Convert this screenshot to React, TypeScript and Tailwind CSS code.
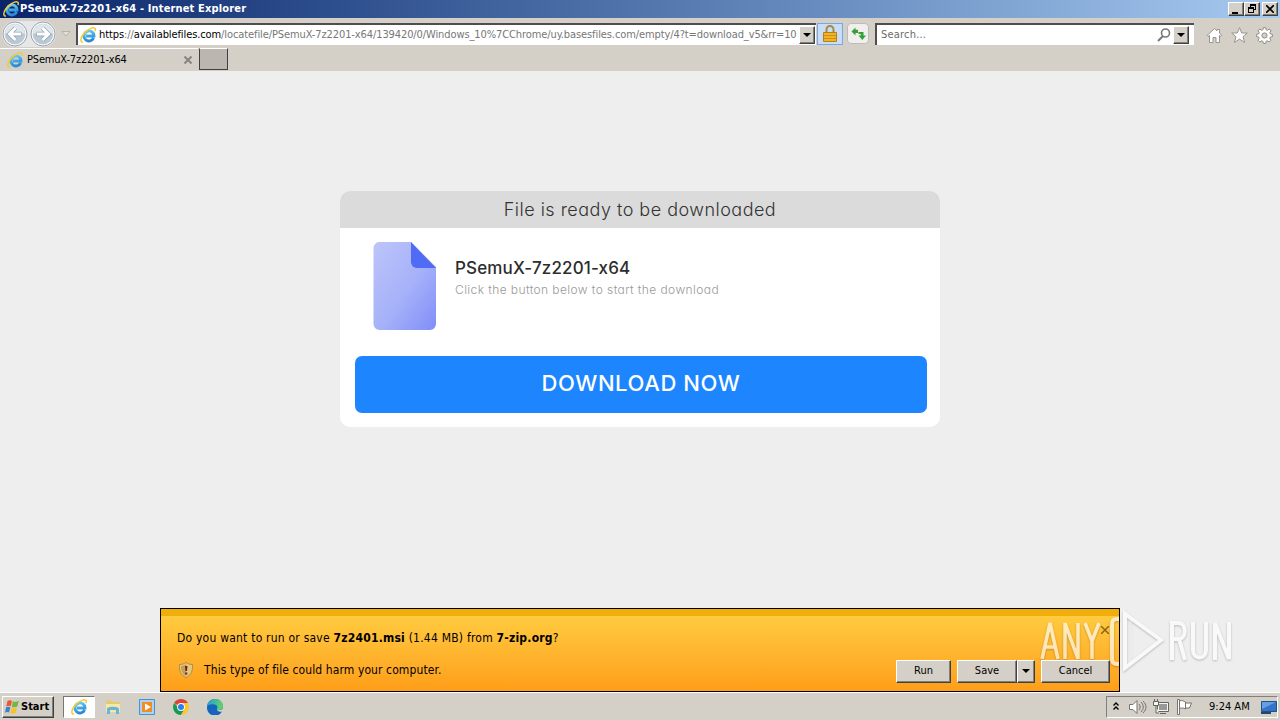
import React from 'react';

const ui = "font-['DejaVu_Sans_Condensed','DejaVu_Sans',sans-serif] [font-stretch:condensed]";
const geo = "font-['Inter',sans-serif] [font-feature-settings:'cv11']";
const raised =
  'bg-[#d4d0c8] border border-t-white border-l-white border-r-[#404040] border-b-[#404040] shadow-[inset_-1px_-1px_0_#808080]';

interface IconProps {
  size: number;
  className?: string;
}

const IeLogo: React.FC<IconProps> = ({ size, className = '' }) => (
  <svg width={size} height={size} viewBox="0 0 16 16" fill="none" className={`shrink-0 ${className}`}>
    <defs>
      <linearGradient id="ie" gradientUnits="userSpaceOnUse" x1="6" y1="2" x2="10" y2="15">
        <stop stopColor="#7ed6f8" />
        <stop offset=".55" stopColor="#3fa6e4" />
        <stop offset="1" stopColor="#2a82cf" />
      </linearGradient>
    </defs>
    <path d="M13.600 10.900A5 5 0 1 1 14 9H6" stroke="url(#ie)" strokeWidth="2.900" />
    <path d="M3 14.900C.4 15.300-.2 12.300 2.800 8 6 3.300 12 0 14.600 1.100c1 .5.9 1.700.3 3" stroke="#f3cb2c" strokeWidth="1.500" />
  </svg>
);

const DownArrow: React.FC = () => (
  <svg width="8" height="4" viewBox="0 0 8 4">
    <path d="M0 0h8L4 4z" fill="#000" />
  </svg>
);

const NavButton: React.FC<{ flip?: boolean }> = ({ flip }) => (
  <svg width="26" height="26" viewBox="0 0 26 26" fill="none" className={flip ? '-scale-x-100' : ''}>
    <circle cx="13" cy="13" r="12" fill="#f8f9fa" stroke="#98a3ab" strokeWidth="1" />
    <circle cx="13" cy="13" r="10.300" fill="#b9c8d3" />
    <path d="M3 13a10 10 0 0 1 20 0c-5-2.500-14-2.500-20 0z" fill="#dfe7ec" />
    <path d="M13.500 7 7.500 13l6 6M8 13h11.500" stroke="#92a3af" strokeWidth="4.400" />
    <path d="M13.500 7 7.500 13l6 6M8 13h11" stroke="#fff" strokeWidth="3" />
  </svg>
);

const TitleBar: React.FC = () => (
  <div className="flex h-[18px] items-center bg-linear-to-r from-[#0a246a] to-[#a6caf0] pr-[2px] pl-[3px]">
    <IeLogo size={16} />
    <span className="mt-px ml-[1px] grow text-[11px] font-bold tracking-[0.15px] whitespace-nowrap text-white">
      PSemuX-7z2201-x64 - Internet Explorer
    </span>
    <div className={`flex h-[14px] w-4 items-center justify-center ${raised}`}>
      <svg width="10" height="9" viewBox="0 0 10 9"><path d="M1 7h6v2H1z" /></svg>
    </div>
    <div className={`flex h-[14px] w-4 items-center justify-center ${raised}`}>
      <svg width="10" height="10" viewBox="0 0 10 10" shapeRendering="crispEdges">
        <path d="M3 0h6v6H7V5h1V2H4v1H3z" />
        <path fillRule="evenodd" d="M1 3h6v6H1zM2 5v3h4V5z" />
      </svg>
    </div>
    <div className={`ml-[2px] flex h-[14px] w-4 items-center justify-center ${raised}`}>
      <svg width="8" height="8" viewBox="0 0 8 8" stroke="#000" strokeWidth="1.6"><path d="m0 0 8 8M8 0 0 8" /></svg>
    </div>
  </div>
);

const Toolbar: React.FC = () => (
  <div className="flex h-[30px] items-center border-t border-[#d4d0c8] pl-[2px]">
    <div className="flex w-[54px] shrink-0 justify-between rounded-full bg-[#e6e7e8]">
      <NavButton />
      <NavButton flip />
    </div>
    <svg width="10" height="6" viewBox="0 0 10 6" className="mx-[5px] shrink-0" fill="#e4e1db" stroke="#b6b2ab">
      <path d="M1 .500h8L5 5z" />
    </svg>
    <div className="flex h-[22px] w-[740px] shrink-0 items-center border-t-2 border-l-2 border-[#504c50] bg-white pl-[2px]">
      <IeLogo size={16} />
      <span className="mt-px ml-[3px] w-[699px] shrink-0 text-[11px] tracking-[-0.1px] whitespace-nowrap text-[#777]">
        <span className="text-black">https</span>://<span className="text-black">availablefiles.com</span>
        /locatefile/PSemuX-7z2201-x64/139420/0/Windows_10%7CChrome/uy.basesfiles.com/empty/4?t=download_v5&amp;rr=10
      </span>
      <div className={`ml-px flex h-[18px] w-4 shrink-0 items-center justify-center ${raised}`}>
        <DownArrow />
      </div>
    </div>
    <div className="ml-px flex h-[22px] w-[26px] shrink-0 items-center justify-center border border-[#76a8e6] bg-[#c9ddf7]">
      <svg width="14" height="17" viewBox="0 0 14 17" fill="none">
        <path d="M3.500 8V4.500a3.500 3.500 0 0 1 7 0V8" stroke="#a88b3c" strokeWidth="2" />
        <path d="M.5 7.500h13v9H.5z" fill="#efb526" stroke="#b97e12" />
        <path d="M1 10.500h12M1 13.500h12" stroke="#ce9014" />
      </svg>
    </div>
    <div className="ml-1 flex h-[21px] w-[22px] shrink-0 items-center justify-center rounded-sm border border-[#bebcb8] bg-[#f0efed]">
      <svg width="15" height="14" viewBox="0 0 15 14" fill="#35a035">
        <path d="M.5 4.500 4.500.5v2.300H7V6H4.500v2.500zM7.500 5h5v3.500H15L11.300 13 7.500 8.500h2.300V7H7.500z" />
      </svg>
    </div>
    <div className="ml-[6px] flex h-[22px] w-[319px] shrink-0 items-center border-t-2 border-l-2 border-[#504c50] bg-white pr-[5px] pl-1">
      <span className="mt-px grow text-[11px] tracking-[0.2px] text-[#6b6b6b]">Search...</span>
      <svg width="14" height="14" viewBox="0 0 14 14" fill="none" stroke="#777" className="mr-[2px]">
        <circle cx="8.500" cy="5" r="4" strokeWidth="1.6" />
        <path d="m6 8-5 5" strokeWidth="2" />
      </svg>
      <div className={`flex h-[18px] w-4 items-center justify-center ${raised}`}>
        <DownArrow />
      </div>
    </div>
    <div className="mt-1 ml-[12px] flex items-center gap-2">
      <svg width="17" height="17" viewBox="0 0 17 17" fill="#fff" stroke="#99958e">
        <path d="m1 8.500 7.500-7 2.500 2.300V2.500h2.500v3.700L16 8.500l-1 1-1.500-1V15.500h-3.500v-5H7v5H3.500v-7l-1.500 1z" />
      </svg>
      <svg width="17" height="17" viewBox="0 0 17 17" fill="#fff" stroke="#99958e">
        <path d="m8.500.7 2.200 5.300h5.600l-4.300 3.700 1.600 5.800-5.100-3.400-5.100 3.400 1.600-5.800L.7 6h5.600z" />
      </svg>
      <svg width="17" height="17" viewBox="0 0 17 17" fill="#fff" stroke="#8f8b85">
        <path d="M7.300.7h2.400l.4 2 1.300.6L13.200 2l1.800 1.800-1.200 1.800.5 1.300 2.100.4v2.400l-2.100.4-.5 1.300 1.200 1.800-1.800 1.800-1.800-1.200-1.300.5-.4 2.100H7.300l-.4-2.100-1.300-.5L3.800 15 2 13.200l1.200-1.800-.5-1.300-2.100-.4V7.300l2.100-.4.5-1.300L2 3.800 3.800 2l1.800 1.300 1.300-.6z" />
        <circle cx="8.500" cy="8.500" r="2.600" fill="#d4d0c8" />
      </svg>
    </div>
  </div>
);

const TabRow: React.FC = () => (
  <div className="flex h-[23px] items-center">
    <div className="flex h-full w-[198px] items-center border-t border-white pr-[6px] pl-[7px]">
      <IeLogo size={16} />
      <span className="mt-px ml-1 grow text-[11px] tracking-[-0.18px] text-black">PSemuX-7z2201-x64</span>
      <svg width="8" height="8" viewBox="0 0 8 8" stroke="#88847f" strokeWidth="2"><path d="m.5.5 7 7m0-7-7 7" /></svg>
    </div>
    <div className="mb-px ml-px h-[22px] w-[29px] border border-t-white border-l-[#404040] border-r-[#404040] border-b-[#404040] bg-[#bcb6b0]" />
  </div>
);

const DownloadCard: React.FC = () => (
  <div className={`mx-auto h-[236px] w-[600px] overflow-hidden rounded-[10px] bg-white ${geo}`}>
    <div className="flex h-[37px] items-center justify-center bg-[#dbdbdb] text-[18px] font-light tracking-[0.48px] text-[#333]">
      File is ready to be downloaded
    </div>
    <div className="flex h-[128px] pt-[14px] pl-[33px]">
      <svg width="64" height="89" viewBox="0 0 64 89">
        <defs>
          <linearGradient id="page" x1="0" y1="0" x2="1" y2="1">
            <stop stopColor="#bec5fa" />
            <stop offset=".55" stopColor="#a5b1f9" />
            <stop offset="1" stopColor="#818df8" />
          </linearGradient>
        </defs>
        <path d="M6 0h32l25 25v57a6 6 0 0 1-6 6H6.500a6 6 0 0 1-6-6V6A6 6 0 0 1 6 0z" fill="url(#page)" />
        <path d="M38 0l25 26H44a6 6 0 0 1-6-6z" fill="#506cf5" />
      </svg>
      <div className="ml-[18px] pt-[13px]">
        <div className="text-[17px] leading-[26px] font-medium tracking-[0.14px] text-[#2d2d2d]">PSemuX-7z2201-x64</div>
        <div className="text-[12px] leading-[18px] font-light tracking-[0.41px] text-[#999]">
          Click the button below to start the download
        </div>
      </div>
    </div>
    <button className="ml-[15px] flex h-[57px] w-[572px] items-center justify-center rounded-[7px] bg-[#1d86ff] pb-[2px] text-[22px] font-medium tracking-[0.6px] text-white">
      DOWNLOAD NOW
    </button>
  </div>
);

const Watermark: React.FC = () => (
  <div className="pointer-events-none absolute top-0 left-[878px] h-[72px] w-[196px] opacity-65">
    <svg width="196" height="72" viewBox="0 0 196 72" fill="none" stroke="#fff" className="drop-shadow-[0_1px_1px_rgba(0,0,0,0.35)]">
      <path d="M3 50 11 14l8 36M6 38h10M26 50V14l13 36V14M46 14l7 18v18M60 14l-7 18" strokeWidth="3.500" />
      <path d="M80 10h-2q-5 0-5 5v35q0 5 5 5h2M86 5v54l36-28z" strokeWidth="4" />
      <path d="M92 10v44" strokeWidth="1" opacity=".5" />
      <path d="M133 51V14h6c9 0 9 16 0 16h-6m7 0 6 21M154 13v28c0 10 13 10 13 0V13M176 51V14l14 36V13" strokeWidth="4" />
    </svg>
  </div>
);

const DialogButton: React.FC<{ label: string; width: string }> = ({ label, width }) => (
  <button className={`flex h-[23px] items-center justify-center pt-px text-[11px] text-black ${raised} ${width}`}>{label}</button>
);

const DownloadPrompt: React.FC = () => (
  <div className="relative mx-auto h-[84px] w-[960px] border border-black bg-linear-to-b from-[#ffcf42] to-[#ff9e18] text-black">
    <div className="h-[7px] bg-[#efae0b]" />
    <div className="flex h-[42px] items-center justify-between pt-[2px] pr-[10px] pl-4">
      <p className="text-[12px] tracking-[0.22px] whitespace-nowrap">
        Do you want to run or save <b>7z2401.msi</b> (1.44 MB) from <b>7-zip.org</b>?
      </p>
      <svg width="8" height="8" viewBox="0 0 8 8" stroke="#896418" strokeWidth="1.5" className="mb-4"><path d="m0 0 8 8M8 0 0 8" /></svg>
    </div>
    <Watermark />
    <div className="relative flex h-6 items-center pr-[9px] pl-[18px]">
      <svg width="14" height="16" viewBox="0 0 14 16">
        <path d="M7 .5c2 1.500 4 2 6.500 2C14 9 12 13.500 7 15.500 2 13.500 0 9 .5 2.500 3 2.500 5 2 7 .5z" fill="#e6c878" stroke="#ad8d51" />
        <path d="M7 2v12C3 12 2 8 2 4c2 0 3.500-.5 5-2z" fill="#c79c55" />
        <path d="M6 4h2.500L8 9H6.500zM6.300 10.500h2v2h-2z" fill="#612611" />
      </svg>
      <p className="ml-[11px] grow text-[12px] tracking-[0.1px]">This type of file could harm your computer.</p>
      <div className="mt-[2px] flex">
        <DialogButton label="Run" width="w-[55px] mr-[6px]" />
        <DialogButton label="Save" width="w-[60px]" />
        <div className={`mr-[6px] flex h-[23px] w-[18px] items-center justify-center ${raised}`}><DownArrow /></div>
        <DialogButton label="Cancel" width="w-[69px]" />
      </div>
    </div>
  </div>
);

const Taskbar: React.FC = () => (
  <div className="flex h-7 items-center border-t border-white bg-[#d4d0c8] pr-[2px] pl-[2px]">
    <button className={`flex h-[22px] w-[52px] items-center gap-[2px] pl-[2px] text-[11px] font-bold text-black ${raised}`}>
      <svg width="14" height="14" viewBox="0 0 14 14">
        <path d="M2.500 1C4-.2 5.500 0 7 .9L5.700 6.300C4.300 5.500 3 5.500 1.300 6.500z" fill="#ea572b" />
        <path d="M7.800 1.300c1.700.8 3.900.8 6.100-.5L12.300 6.500c-1.900 1-3.700 1-5.500.2z" fill="#77b63b" />
        <path d="M1 7.500c1.500-1 3-1 4.400-.2L4 12.600C2.700 11.800 1.500 11.800 0 12.800z" fill="#3a80d2" />
        <path d="M6.400 7.700c1.600.8 3.600.8 5.600-.1L10.600 13c-2 1.100-3.900 1-5.500.2z" fill="#f4c42e" />
      </svg>
      <span className="mt-px">Start</span>
    </button>
    <div className="ml-[9px] flex h-[22px] w-8 items-center justify-center border border-t-[#777] border-l-[#777] border-r-white border-b-white bg-white">
      <IeLogo size={16} />
    </div>
    <div className="ml-[10px] flex items-center gap-[18px]">
      <svg width="16" height="16" viewBox="0 0 16 16">
        <path d="M1 3V1.500h5L7.500 3H15v10H1z" fill="#e6ca70" />
        <path d="M1 5h14v8H1z" fill="#f7e7a4" />
        <path d="M2 15V10c0-3 12-3 12 0v5h-3v-4H5v4z" fill="#66b6d9" />
      </svg>
      <svg width="16" height="16" viewBox="0 0 16 16">
        <path d="M.5.500h15v15H.5z" fill="#a9d2f4" stroke="#4b91cc" />
        <path d="M3 3h10v10H3z" fill="#f28b20" />
        <path d="m6 4.500 6 3.500-6 3.500z" fill="#fff" />
      </svg>
      <svg width="16" height="16" viewBox="0 0 16 16">
        <path d="M8 8 1.100 4a8 8 0 0 1 13.800 0z" fill="#db4437" />
        <path d="M8 8h-3L1.100 4A8 8 0 0 0 8 16l3.500-6z" fill="#169b55" />
        <path d="M8 4h6.900A8 8 0 0 1 8 16l3.500-6z" fill="#fbc82b" />
        <circle cx="8" cy="8" r="3.900" fill="#fff" />
        <circle cx="8" cy="8" r="3" fill="#337de8" />
      </svg>
      <svg width="16" height="16" viewBox="0 0 16 16">
        <defs>
          <linearGradient id="edge" x1="0" x2="1" y1="0" y2=".3">
            <stop stopColor="#1e9bd8" />
            <stop offset="1" stopColor="#5fd36a" />
          </linearGradient>
        </defs>
        <path d="M0 8a8 8 0 0 1 16 0c0 3-4 3.500-6 2 0 2 2.500 3.500 5 2.500A8 8 0 0 1 0 8z" fill="#1565c0" />
        <path d="M0 7.500C1-2 15-3 16 7c.2 3.800-4.500 4.300-6.300 3 1.300-1 1-4-2-4.500C4 5 1 5.500 0 7.500z" fill="url(#edge)" />
      </svg>
    </div>
    <div className="ml-auto flex h-[22px] w-[172px] items-center border border-t-[#808080] border-l-[#808080] border-r-white border-b-white pl-[6px]">
      <svg width="6" height="9" viewBox="0 0 6 9" fill="none" stroke="#000" strokeWidth="1.400"><path d="m.5 3.500 2.500-2.500 2.500 2.500m-5 4L3 5l2.500 2.500" /></svg>
      <svg width="18" height="16" viewBox="0 0 18 16" fill="#fff" stroke="#77736d" className="ml-[10px]">
        <path d="M.5 5.500H4l4-4v13l-4-4H.5z" />
        <path d="M10 5c1.500 2 1.500 4 0 6m2-8c3 3 3 7 0 10m2-11c4 4 4 8 0 12" fill="none" />
      </svg>
      <svg width="16" height="16" viewBox="0 0 16 16" fill="#f5f5f5" stroke="#67635f" className="ml-[6px]">
        <path d="M4.500 3.500h11v9h-11zM7 14.500h6" />
        <path d="M6 5h8v6H6z" fill="#999" stroke="none" />
        <path d="M.5 2.500h5v4h-5zM1.500 0v2M4.500 0v2M3 7v7h3" />
      </svg>
      <svg width="16" height="16" viewBox="0 0 16 16" fill="#fff" stroke="#77736d" className="ml-[8px]">
        <path d="M.5.500h2v15h-2zM2.500 2c3-1 4 0 6 1v7c-2-1-3-1.500-6-.5zM8.500 4h6l-2 5h-4z" />
      </svg>
      <span className="mt-px ml-4 text-[11px] whitespace-nowrap text-black">9:24 AM</span>
      <svg width="16" height="14" viewBox="0 0 16 14" className="ml-auto">
        <path d="M.5 1.500h15v10H.5z" fill="#3474c8" stroke="#205085" />
        <path d="M1 2h14L1 9z" fill="#64a0e4" />
        <path d="M0 12h10v2H0z" fill="#29456d" />
      </svg>
    </div>
  </div>
);

const App: React.FC = () => (
  <div className={`flex h-[720px] w-[1280px] flex-col overflow-hidden bg-[#d4d0c8] ${ui}`}>
    <TitleBar />
    <Toolbar />
    <TabRow />
    <main className="flex grow flex-col justify-between bg-[#eee] pt-[120px]">
      <DownloadCard />
      <DownloadPrompt />
    </main>
    <Taskbar />
  </div>
);

export default App;
